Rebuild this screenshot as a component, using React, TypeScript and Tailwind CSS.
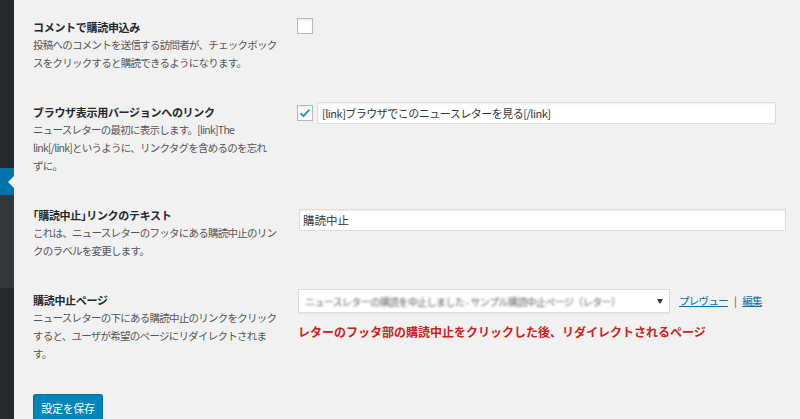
import type { ReactNode } from 'react';

const font = { fontFamily: '"Noto Sans CJK JP", "Noto Sans", sans-serif' };

type RowProps = {
  title: ReactNode;
  lines: ReactNode[];
  children: ReactNode;
};

function SettingRow({ title, lines, children }: RowProps) {
  return (
    <div className="flex items-start">
      <div className="w-[264px] shrink-0">
        <div className="text-[11px] leading-[18px] font-bold tracking-[-0.3px] text-[#23282d]">{title}</div>
        <p className="text-[10.5px] leading-[18px] tracking-[-0.75px] text-[#555]">
          {lines.map((line, i) => (
            <span key={i} className="block whitespace-nowrap">
              {line}
            </span>
          ))}
        </p>
      </div>
      <div className="flex-1">{children}</div>
    </div>
  );
}

function Checkbox({ checked }: { checked?: boolean }) {
  return (
    <span className="flex h-[16px] w-[16px] shrink-0 items-center justify-center border border-[#b4b9be] bg-white shadow-[inset_0_1px_2px_rgba(0,0,0,0.1)]">
      {checked && (
        <svg width="12" height="10" viewBox="0 0 12 10">
          <path d="M1.5 5.2 L4.5 8.2 L10.5 1.5" fill="none" stroke="#1e8cbe" strokeWidth="1.8" />
        </svg>
      )}
    </span>
  );
}

function Sidebar() {
  return (
    <div className="flex w-[14px] shrink-0 flex-col">
      <div className="h-[168px] bg-[#23282d]" />
      <div className="flex h-[27px] items-center justify-end bg-[#0073aa]">
        <span className="h-0 w-0 border-y-[6px] border-r-[6px] border-y-transparent border-r-[#f1f1f1]" />
      </div>
      <div className="h-[93px] bg-[#32373c]" />
      <div className="flex-1 bg-[#23282d]" />
    </div>
  );
}

export default function App() {
  return (
    <div className="flex h-[419px] w-[800px] overflow-hidden bg-[#f1f1f1]" style={font}>
      <Sidebar />
      <div className="flex flex-1 flex-col gap-[31px] pl-[19px] pt-[18px]">
        <SettingRow
          title="コメントで購読申込み"
          lines={['投稿へのコメントを送信する訪問者が、チェックボック', 'スをクリックすると購読できるようになります。']}
        >
          <Checkbox />
        </SettingRow>

        <SettingRow
          title="ブラウザ表示用バージョンへのリンク"
          lines={[
            'ニュースレターの最初に表示します。[link]The',
            'link[/link]というように、リンクタグを含めるのを忘れ',
            'ずに。',
          ]}
        >
          <div className="-mt-[1px] flex items-center gap-[4px]">
            <Checkbox checked />
            <input
              className="h-[22px] w-[459px] border border-[#ddd] bg-white px-[4px] text-[11px] tracking-[-0.5px] text-[#32373c] shadow-[inset_0_1px_2px_rgba(0,0,0,0.07)] outline-none"
              type="text"
              defaultValue="[link]ブラウザでこのニュースレターを見る[/link]"
            />
          </div>
        </SettingRow>

        <SettingRow
          title={
            <>
              <span className="[font-feature-settings:'halt']">「</span>購読中止
              <span className="[font-feature-settings:'halt']">」</span>リンクのテキスト
            </>
          }
          lines={['これは、ニュースレターのフッタにある購読中止のリン', 'クのラベルを変更します。']}
        >
          <input
            className="-mt-[1px] ml-[2px] h-[22px] w-[487px] border border-[#ddd] bg-white px-[3px] text-[11.5px] text-[#32373c] shadow-[inset_0_1px_2px_rgba(0,0,0,0.07)] outline-none"
            type="text"
            defaultValue="購読中止"
          />
        </SettingRow>

        <SettingRow
          title="購読中止ページ"
          lines={[
            'ニュースレターの下にある購読中止のリンクをクリック',
            'すると、ユーザが希望のページにリダイレクトされま',
            'す。',
          ]}
        >
          <div className="-mt-[2px] ml-[1px] flex flex-col gap-[10px]">
            <div className="flex items-center">
              <div className="flex h-[24px] w-[372px] shrink-0 items-center justify-between gap-[14px] border border-[#ddd] bg-white pl-[6px] pr-[6px] shadow-[0_1px_1px_rgba(0,0,0,0.04)]">
                <span className="min-w-0 overflow-hidden whitespace-nowrap text-[10px] tracking-[-0.6px] text-[#666] blur-[1.2px]">
                  ニュースレターの購読を中止しました - サンプル購読中止ページ（レター）
                </span>
                <svg className="shrink-0" width="6" height="5" viewBox="0 0 6 5">
                  <path d="M0 0 H6 L3 5 Z" fill="#333" />
                </svg>
              </div>
              <div className="ml-[9px] flex items-center text-[10.5px] tracking-[-0.7px]">
                <a className="text-[#0073aa] underline" href="#">
                  プレヴュー
                </a>
                <span className="mx-[6px] text-[#555]">|</span>
                <a className="text-[#0073aa] underline" href="#">
                  編集
                </a>
              </div>
            </div>
            <div className="text-[12px] leading-[18px] font-bold text-[#d0201e]">
              レターのフッタ部の購読中止をクリックした後、リダイレクトされるページ
            </div>
          </div>
        </SettingRow>

        <div>
          <button
            type="button"
            className="h-[28px] w-[70px] rounded-[3px] border border-[#0073aa] border-b-[#006799] bg-[#0085ba] text-[11px] tracking-[-0.3px] text-white shadow-[0_1px_0_#006799]"
          >
            設定を保存
          </button>
        </div>
      </div>
    </div>
  );
}
